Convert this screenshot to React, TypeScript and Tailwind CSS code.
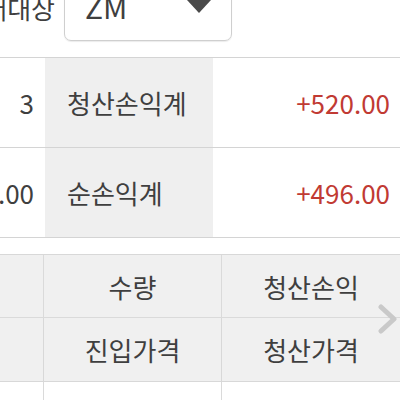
import React from "react";

const font = { fontFamily: '"Noto Sans CJK KR", "Noto Sans", sans-serif' };

export default function App() {
  return (
    <div className="w-[400px] h-[400px] overflow-hidden bg-white text-[#3f3f3f]" style={font}>
      {/* top selector */}
      <div className="h-[58px] border-b border-[#d4d4d4] flex flex-col">
        <div className="flex items-center h-[71px] -mt-[30px]">
          <div className="w-[64px] flex justify-end overflow-hidden pr-[9px] pt-[4px] whitespace-nowrap text-[26px] leading-[30px]">
            래대상
          </div>
          <div className="w-[168px] h-[71px] border border-[#cfcfcf] rounded-[7px] flex items-center justify-between pl-[20px] pr-[20px] shadow-[0_1px_1px_rgba(0,0,0,0.08)]">
            <span className="text-[30px] leading-none">ZM</span>
            <svg width="24" height="14" viewBox="0 0 24 14" className="mt-[2px]">
              <polygon points="0,0 24,0 12,13" fill="#4a4a4a" />
            </svg>
          </div>
        </div>
      </div>

      {/* rows */}
      <div className="flex h-[90px] border-b border-[#d4d4d4]">
        <div className="w-[45px] flex items-center justify-end pr-[11px] overflow-hidden whitespace-nowrap text-[26px]">3</div>
        <div className="w-[168px] bg-[#efefef] flex items-center pl-[22px] text-[26px]">청산손익계</div>
        <div className="flex-1 flex items-center justify-end pr-[10px] text-[26px] text-[#c13a33]">+520.00</div>
      </div>
      <div className="flex h-[90px] border-b border-[#d4d4d4]">
        <div className="w-[45px] flex items-center justify-end pr-[11px] overflow-hidden whitespace-nowrap text-[26px]">24.00</div>
        <div className="w-[168px] bg-[#efefef] flex items-center pl-[22px] text-[26px]">순손익계</div>
        <div className="flex-1 flex items-center justify-end pr-[10px] text-[26px] text-[#c13a33]">+496.00</div>
      </div>

      {/* table */}
      <div className="mt-[16px] border-t border-[#d8d8d8] relative">
        <div className="grid grid-cols-[44px_178px_1fr] bg-[#f0f0f0] text-[26px]">
          <div className="h-[63px] border-r border-b border-[#dadada]"></div>
          <div className="h-[63px] border-r border-b border-[#dadada] flex items-center justify-center">수량</div>
          <div className="h-[63px] border-b border-[#dadada] flex items-center justify-center">청산손익</div>
          <div className="h-[64px] border-r border-b border-[#d8d8d8]"></div>
          <div className="h-[64px] border-r border-b border-[#d8d8d8] flex items-center justify-center">진입가격</div>
          <div className="h-[64px] border-b border-[#d8d8d8] flex items-center justify-center">청산가격</div>
        </div>
        <div className="grid grid-cols-[44px_178px_1fr] h-[40px]">
          <div className="border-r border-[#dadada]"></div>
          <div className="border-r border-[#dadada]"></div>
          <div></div>
        </div>
        <svg className="absolute left-[378px] top-[49px]" width="20" height="30" viewBox="0 0 20 30">
          <polyline points="3,3 16,15 3,27" fill="none" stroke="#c9c9c9" strokeWidth="5" strokeLinecap="round" strokeLinejoin="round" />
        </svg>
      </div>
    </div>
  );
}
